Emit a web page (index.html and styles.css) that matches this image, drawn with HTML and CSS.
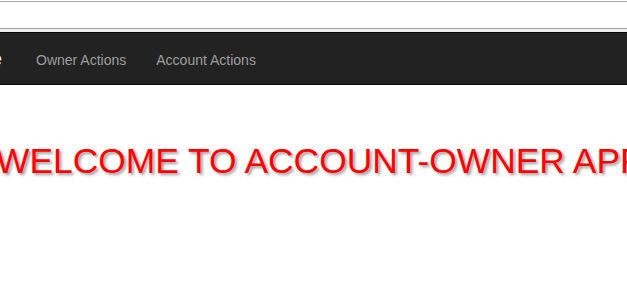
FILE: index.html
```html
<!DOCTYPE html>
<html lang="en">
<head>
  <meta charset="UTF-8">
  <title>Account-Owner</title>
  <link rel="stylesheet" href="styles.css">
</head>
<body>
  <div class="topbar">
    <div class="topbar-box"></div>
  </div>
  <nav class="navbar">
    <a class="brand" href="#">Home</a>
    <ul class="nav">
      <li><a href="#">Owner Actions</a></li>
      <li><a href="#">Account Actions</a></li>
    </ul>
  </nav>
  <div class="content">
    <h1 class="welcome">WELCOME TO ACCOUNT-OWNER APP</h1>
  </div>
</body>
</html>
```

FILE: styles.css
```css
html, body { margin: 0; padding: 0; overflow: hidden; }
body { font-family: "Liberation Sans", Arial, sans-serif; font-size: 14px; line-height: 20px; color: #333; background: #fff; }
.topbar { padding-top: 1px; background: #fff; }
.topbar-box { height: 26px; border-top: 1px solid #a9a9a9; border-bottom: 1px solid #a9a9a9; background: #fff; }
.navbar { display: flex; align-items: stretch; height: 53px; box-sizing: border-box; margin-top: 3px; background: #222; border-top: 1px solid #080808; border-bottom: 1px solid #080808; box-shadow: 0 -3px 0 #ececec; margin-left: -61px; }
.brand { padding: 16px 19px 15px 15px; font-size: 18px; line-height: 20px; color: #f2f2f2; text-decoration: none; }
.nav { display: flex; list-style: none; margin: 0; padding: 0; }
.nav a { display: block; padding: 17px 15px 15px; color: #9d9d9d; text-decoration: none; }
.content { padding-top: 56px; margin-left: -4px; white-space: nowrap; }
.welcome { margin: 0; font-size: 35.4px; line-height: 40px; font-weight: normal; color: #ff0000; text-shadow: 2px 2px 3px #999; }
```
